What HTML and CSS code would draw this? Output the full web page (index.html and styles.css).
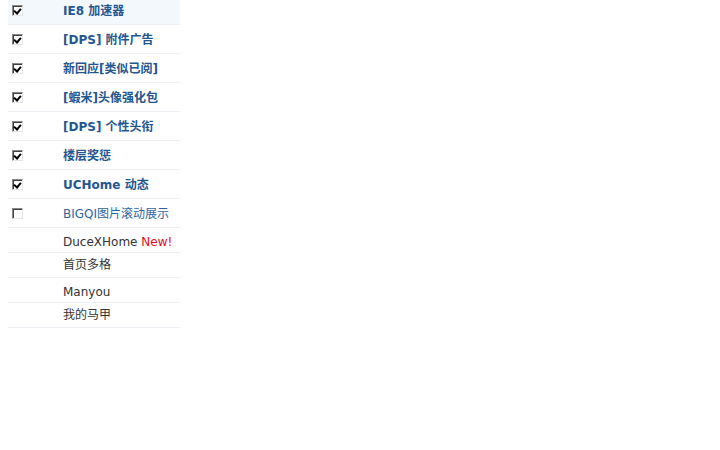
FILE: index.html
```html
<!DOCTYPE html>
<html>
<head>
<meta charset="utf-8">
<link rel="stylesheet" href="styles.css">
</head>
<body>
<table class="plugins">
  <tr class="row tall hl">
    <td class="chk"><span class="cb on"></span></td>
    <td class="name b">IE8 加速器</td>
  </tr>
  <tr class="row tall">
    <td class="chk"><span class="cb on"></span></td>
    <td class="name b">[DPS] 附件广告</td>
  </tr>
  <tr class="row tall">
    <td class="chk"><span class="cb on"></span></td>
    <td class="name b">新回应[类似已阅]</td>
  </tr>
  <tr class="row tall">
    <td class="chk"><span class="cb on"></span></td>
    <td class="name b">[蝦米]头像强化包</td>
  </tr>
  <tr class="row tall">
    <td class="chk"><span class="cb on"></span></td>
    <td class="name b">[DPS] 个性头衔</td>
  </tr>
  <tr class="row tall">
    <td class="chk"><span class="cb on"></span></td>
    <td class="name b">楼层奖惩</td>
  </tr>
  <tr class="row tall">
    <td class="chk"><span class="cb on"></span></td>
    <td class="name b">UCHome 动态</td>
  </tr>
  <tr class="row tall">
    <td class="chk"><span class="cb"></span></td>
    <td class="name link">BIGQI图片滚动展示</td>
  </tr>
  <tr class="row short latin">
    <td class="chk"></td>
    <td class="name plain">DuceXHome <span class="new">New!</span></td>
  </tr>
  <tr class="row short">
    <td class="chk"></td>
    <td class="name plain">首页多格</td>
  </tr>
  <tr class="row short latin">
    <td class="chk"></td>
    <td class="name plain">Manyou</td>
  </tr>
  <tr class="row short">
    <td class="chk"></td>
    <td class="name plain">我的马甲</td>
  </tr>
</table>
</body>
</html>
```
FILE: styles.css
```css
html, body {
  background: #fff;
}
body {
  margin: 0 8px;
  font-family: "DejaVu Sans", Verdana, "Noto Sans CJK SC", sans-serif;
  font-size: 12px;
}
.plugins {
  margin-top: -4px;
  width: 172px;
  border-collapse: collapse;
}
.row td {
  border-bottom: 1px solid #eef2f6;
  padding: 0;
  vertical-align: middle;
  line-height: 16px;
}
.row.tall td {
  height: 26px;
  padding-top: 2px;
}
.row.short td {
  height: 24px;
}
.row.short.latin td {
  height: 21px;
  padding-top: 3px;
}
.row.hl td {
  background: #f2f8fc;
}
.row td.chk {
  width: 51px;
  padding-left: 4px;
}
.cb {
  display: block;
  width: 11px;
  height: 11px;
  box-sizing: border-box;
  border-top: 1px solid #8a8a8a;
  border-left: 1px solid #8a8a8a;
  border-right: 1px solid #e6e6e6;
  border-bottom: 1px solid #e6e6e6;
  box-shadow: inset 1px 1px 0 #404040;
  background: #fff;
  position: relative;
  margin-top: -1px;
}
.cb.on::after {
  content: "";
  position: absolute;
  left: 2px;
  top: 1px;
  width: 3px;
  height: 5px;
  border-right: 2px solid #000;
  border-bottom: 2px solid #000;
  transform: rotate(40deg);
}
.name {
  white-space: nowrap;
  font-size: 12px;
}
.name.b {
  font-weight: bold;
  color: #24578f;
}
.name.link {
  color: #2f66a0;
}
.name.plain {
  color: #333;
}
.new {
  color: #e0101e;
}
```
